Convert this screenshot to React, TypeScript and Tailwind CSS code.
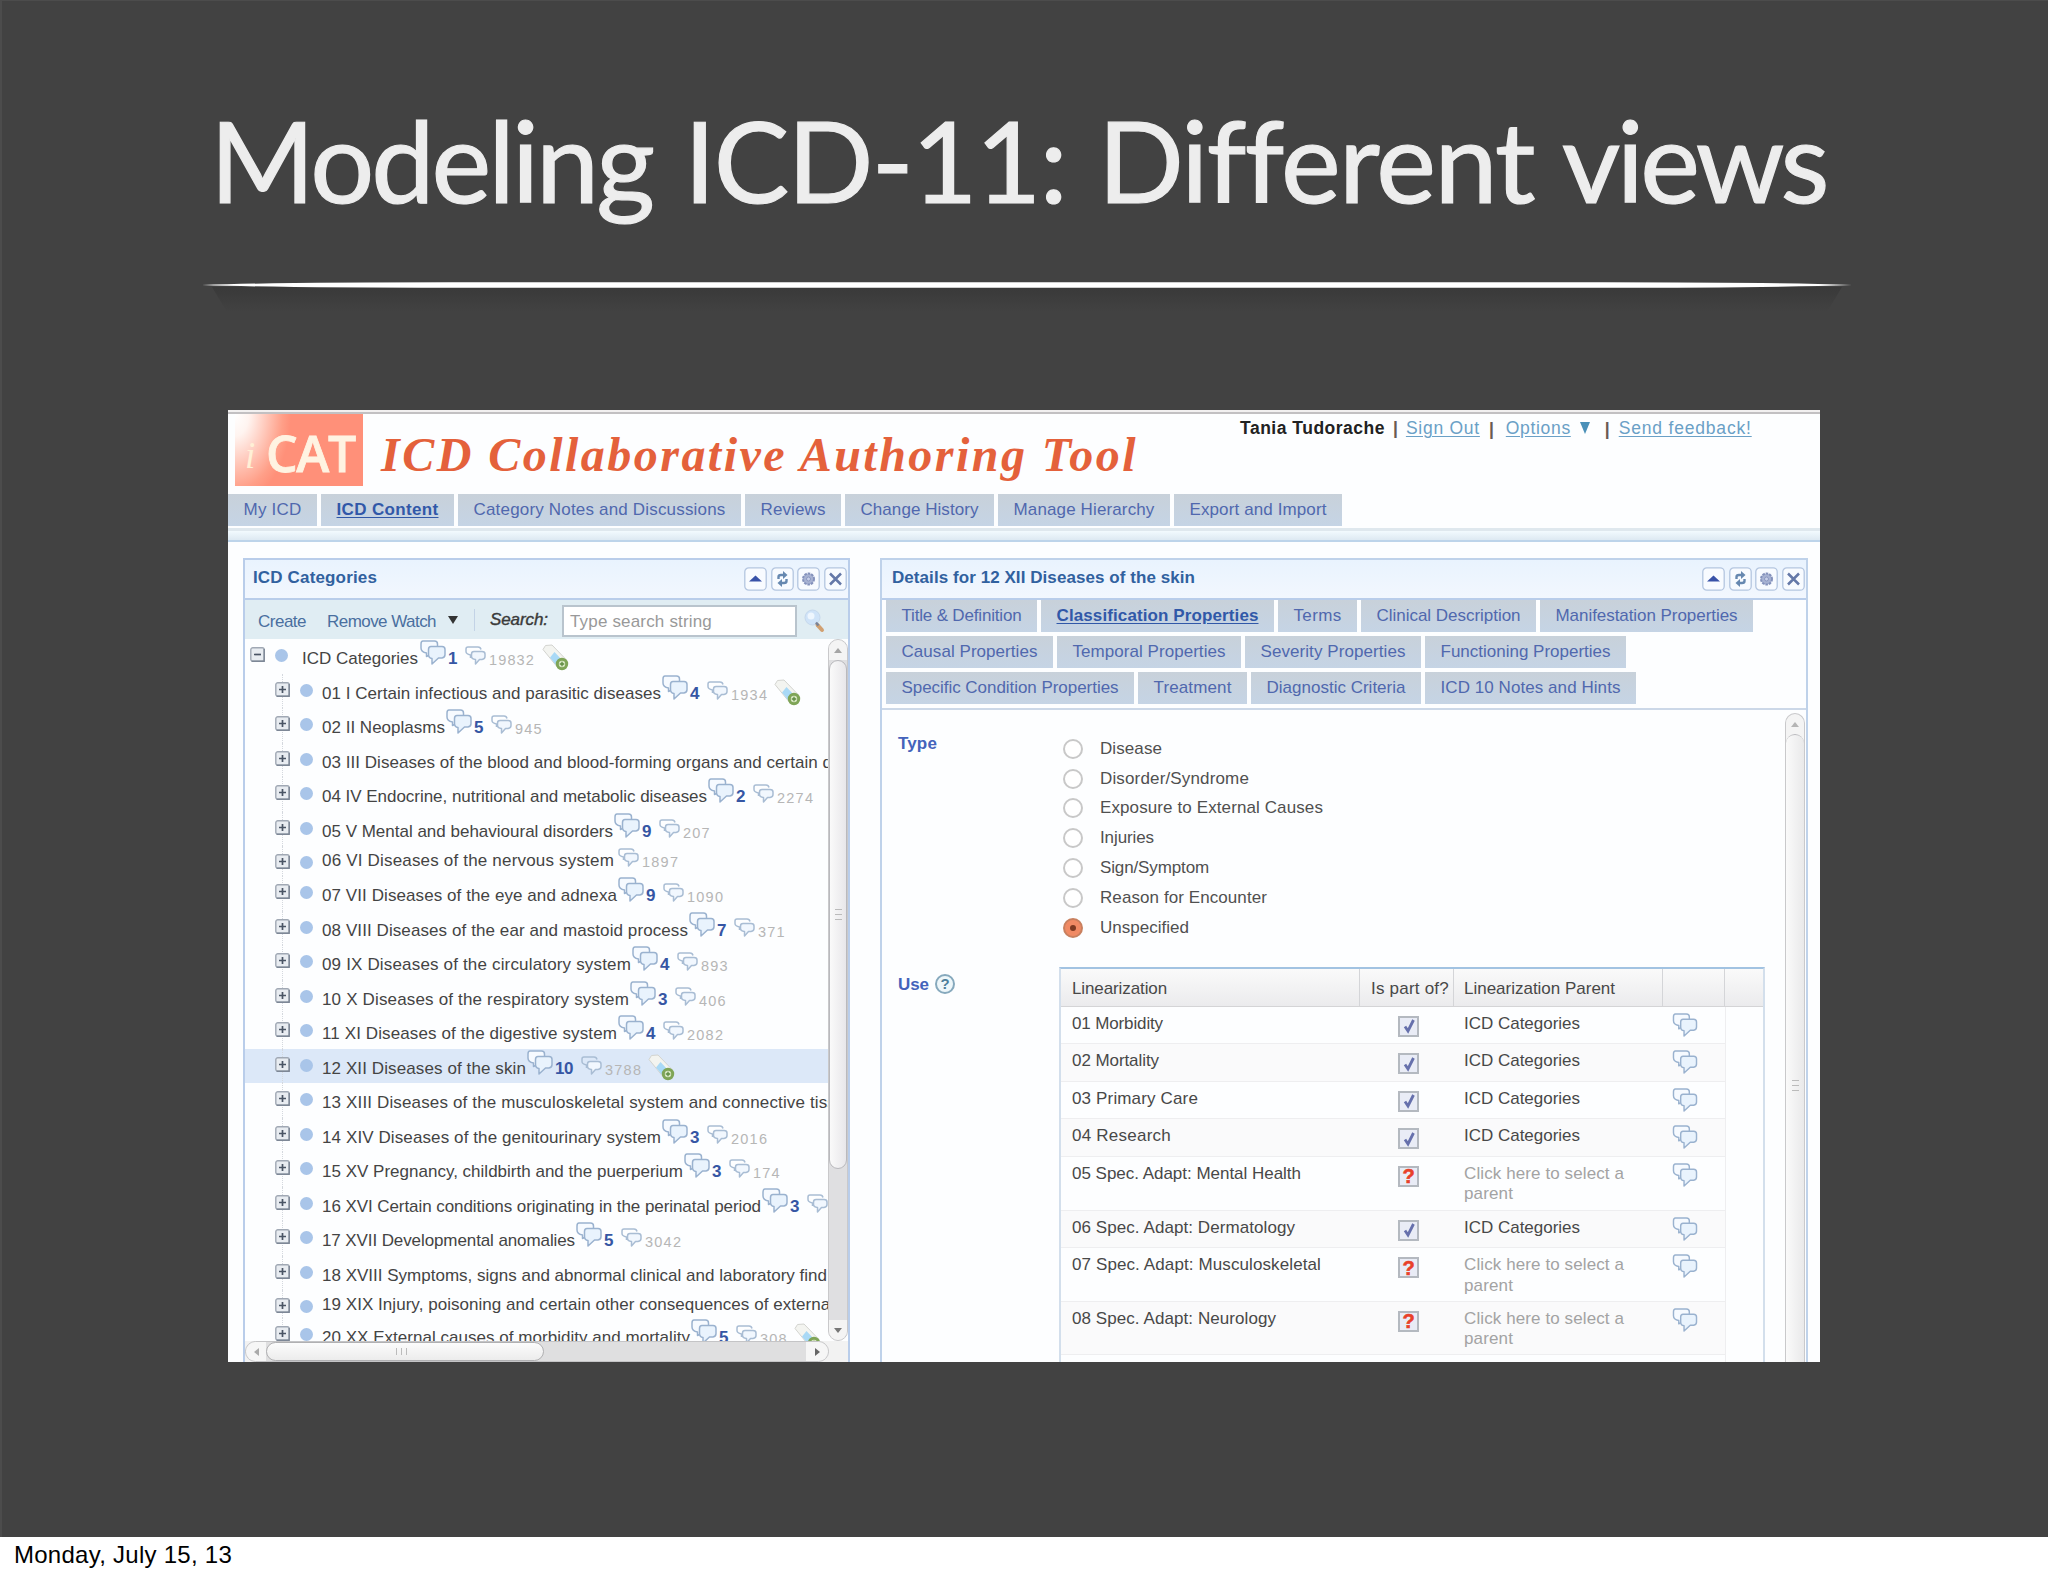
import { useLayoutEffect, useRef, useState, type ReactNode } from "react"
import { clsx } from "clsx"

type TabItem = { label: string; w: number; active?: boolean }
type TreeItem = { label: string; w: number; notes?: number; total?: number; tag?: boolean; selected?: boolean; h?: number }

const MAIN_TABS: TabItem[] = [
  { label: "My ICD", w: 58 },
  { label: "ICD Content", w: 102, active: true },
  { label: "Category Notes and Discussions", w: 252 },
  { label: "Reviews", w: 65 },
  { label: "Change History", w: 118 },
  { label: "Manage Hierarchy", w: 141 },
  { label: "Export and Import", w: 137 },
]

const DETAIL_TABS: TabItem[][] = [
  [
    { label: "Title & Definition", w: 120 },
    { label: "Classification Properties", w: 202, active: true },
    { label: "Terms", w: 48 },
    { label: "Clinical Description", w: 144 },
    { label: "Manifestation Properties", w: 182 },
  ],
  [
    { label: "Causal Properties", w: 136 },
    { label: "Temporal Properties", w: 153 },
    { label: "Severity Properties", w: 145 },
    { label: "Functioning Properties", w: 170 },
  ],
  [
    { label: "Specific Condition Properties", w: 217 },
    { label: "Treatment", w: 78 },
    { label: "Diagnostic Criteria", w: 139 },
    { label: "ICD 10 Notes and Hints", w: 180 },
  ],
]

const TREE: TreeItem[] = [
  { label: "01 I Certain infectious and parasitic diseases", w: 339, notes: 4, total: 1934, tag: true },
  { label: "02 II Neoplasms", w: 123, notes: 5, total: 945 },
  { label: "03 III Diseases of the blood and blood-forming organs and certain d", w: 510 },
  { label: "04 IV Endocrine, nutritional and metabolic diseases", w: 385, notes: 2, total: 2274 },
  { label: "05 V Mental and behavioural disorders", w: 291, notes: 9, total: 207 },
  { label: "06 VI Diseases of the nervous system", w: 292, total: 1897, h: 30 },
  { label: "07 VII Diseases of the eye and adnexa", w: 295, notes: 9, total: 1090 },
  { label: "08 VIII Diseases of the ear and mastoid process", w: 366, notes: 7, total: 371 },
  { label: "09 IX Diseases of the circulatory system", w: 309, notes: 4, total: 893 },
  { label: "10 X Diseases of the respiratory system", w: 307, notes: 3, total: 406 },
  { label: "11 XI Diseases of the digestive system", w: 295, notes: 4, total: 2082 },
  { label: "12 XII Diseases of the skin", w: 204, notes: 10, total: 3788, tag: true, selected: true },
  { label: "13 XIII Diseases of the musculoskeletal system and connective tiss", w: 514 },
  { label: "14 XIV Diseases of the genitourinary system", w: 339, notes: 3, total: 2016 },
  { label: "15 XV Pregnancy, childbirth and the puerperium", w: 361, notes: 3, total: 174 },
  { label: "16 XVI Certain conditions originating in the perinatal period", w: 439, notes: 3, total: 412 },
  { label: "17 XVII Developmental anomalies", w: 253, notes: 5, total: 3042 },
  { label: "18 XVIII Symptoms, signs and abnormal clinical and laboratory find", w: 505 },
  { label: "19 XIX Injury, poisoning and certain other consequences of external", w: 512, h: 28 },
  { label: "20 XX External causes of morbidity and mortality", w: 368, notes: 5, total: 308, tag: true },
]

const TYPES = [
  { label: "Disease", w: 62 },
  { label: "Disorder/Syndrome", w: 149 },
  { label: "Exposure to External Causes", w: 223 },
  { label: "Injuries", w: 54 },
  { label: "Sign/Symptom", w: 109 },
  { label: "Reason for Encounter", w: 167 },
  { label: "Unspecified", w: 89 },
]

const LINEARIZATIONS = [
  { label: "01 Morbidity", w: 91, part: true },
  { label: "02 Mortality", w: 87, part: true },
  { label: "03 Primary Care", w: 126, part: true },
  { label: "04 Research", w: 99, part: true },
  { label: "05 Spec. Adapt: Mental Health", w: 229, part: false },
  { label: "06 Spec. Adapt: Dermatology", w: 223, part: true },
  { label: "07 Spec. Adapt: Musculoskeletal", w: 249, part: false },
  { label: "08 Spec. Adapt: Neurology", w: 204, part: false },
]

// Tracks the text so that it takes up exactly `w` pixels
function Fit({ w, className, children }: { w: number; className?: string; children: string }) {
  const ref = useRef<HTMLSpanElement>(null)
  const [spacing, setSpacing] = useState(0)

  useLayoutEffect(() => {
    if (!ref.current) return
    const natural = ref.current.getBoundingClientRect().width - spacing * children.length
    setSpacing((w - natural) / children.length)
  }, [w, children])

  return (
    <span className={clsx("block shrink-0 whitespace-nowrap", className)} style={{ width: w }}>
      <span ref={ref} style={{ letterSpacing: spacing }}>{children}</span>
    </span>
  )
}

function Bubbles({ className }: { className?: string }) {
  return (
    <svg viewBox="0 0 26 25" className={clsx("h-[25px] w-[26px] shrink-0", className)} fill="none" stroke="#9ab2cf" strokeWidth="1.500" strokeLinejoin="round">
      <path d="M3 1h11.500q3 0 3 3v5q0 3-3 3.500L6.500 16.500V13Q1 12 1 8V4q0-3 2-3z" fill="#f6faff" />
      <path d="M11 6.500h11q3 0 3 3v5q0 3-3 3.500h-3.500L12 24v-5.500q-3.500-.5-3.500-4V9.500q0-3 2.500-3z" fill="#e9f3fd" />
    </svg>
  )
}

function MiniBubbles({ className }: { className?: string }) {
  return (
    <svg viewBox="0 0 21 19" className={clsx("h-[19px] w-[21px] shrink-0", className)} fill="none" stroke="#a9bdd4" strokeWidth="1.500" strokeLinejoin="round">
      <path d="M5.500 12V9Q1 8 1 5.500V3q0-2 2-2h10q2.500 0 3 2.500" />
      <path d="M9 5.500h8q3 0 3 2.500v2.500q0 2.500-3 3h-2.500L10.500 18v-4.500Q6.500 13 6.500 10.500V8q0-2.500 2.500-2.500z" fill="#f1f7fe" />
    </svg>
  )
}

function TagIcon({ className }: { className?: string }) {
  return (
    <svg viewBox="0 0 27 27" className={clsx("size-[27px] shrink-0", className)}>
      <path d="M1 5.500L3.500 1.500L10 1l15 15.500-8.500 8z" fill="#f3f4f0" stroke="#d3d4d0" />
      <path d="M12.500 8l7 7.500-5.500 5.500-6-7.500z" fill="#a9d9f6" />
      <circle cx="20" cy="20" r="4.700" fill="#d9e8c4" stroke="#7fa557" strokeWidth="3" />
      <path d="M17.800 20h4.400M20 17.800v4.400" stroke="#5d8a40" strokeWidth="1.300" />
    </svg>
  )
}

function Toggle({ open }: { open?: boolean }) {
  return (
    <svg viewBox="0 0 15 15" className="size-[15px] shrink-0">
      <rect x=".8" y=".8" width="13.400" height="13.400" rx="2" fill="#e8ecf1" stroke="#a0a8b4" strokeWidth="1.400" />
      <path d={open ? "M4 7.500h7" : "M4 7.500h7M7.500 4v7"} stroke="#4a5565" strokeWidth="1.700" />
      <path d="M1.500 14.200h12.700V2" fill="none" stroke="#7d8796" strokeWidth="1.400" />
    </svg>
  )
}

function PanelButtons() {
  const icons = [
    <path key="up" d="M5 14.500l6.500-6 6.500 6z" fill="#3852a8" />,
    <g key="sync" fill="none" stroke="#6688b0" strokeWidth="2.400">
      <path d="M7.500 12V10q0-2 2.500-2h3M15.500 12V14q0 2-2.500 2h-3" />
      <path d="M12 4l4.500 4-4.500 4zM11 12l-4.500 4 4.500 4z" fill="#6688b0" stroke="none" />
    </g>,
    <g key="gear">
      <circle cx="11.500" cy="12" r="5.500" fill="#a7b2d2" stroke="#8391bb" strokeWidth="2" strokeDasharray="2.500 1" />
      <circle cx="11.500" cy="12" r="2" fill="#c8d0e8" stroke="#8a97c0" />
    </g>,
    <path key="close" d="M6 6.500l11 11M17 6.500l-11 11" stroke="#6478a8" strokeWidth="2.500" />,
  ]
  return (
    <div className="flex gap-[3.700px]">
      {icons.map((icon, i) => (
        <svg key={i} viewBox="0 0 23 24" className="h-6 w-[23px]">
          <rect x=".8" y=".8" width="21.400" height="22.400" rx="4" fill="#f8fbff" stroke="#b4c6e0" strokeWidth="1.300" />
          {icon}
        </svg>
      ))}
    </div>
  )
}

function PanelHeader({ children }: { children: ReactNode }) {
  return (
    <div className="flex h-[40px] shrink-0 items-start justify-between border-b-2 border-[#b9cdea] bg-linear-to-b from-[#e9f3fe] to-[#f2f7fe] text-[17px] leading-5 font-bold text-[#31619f]">
      {children}
    </div>
  )
}

function Tab({ tab }: { tab: TabItem }) {
  return (
    <div className={clsx(
      "flex h-8 items-center bg-linear-to-b from-[#c8d1da] to-[#c5d4e5] px-[15.500px] text-[17px] leading-5",
      tab.active ? "font-bold text-[#3158a8] underline underline-offset-2" : "text-[#5068ae]",
    )}>
      <Fit w={tab.w}>{tab.label}</Fit>
    </div>
  )
}

function TreeRow({ item }: { item: TreeItem }) {
  const short = item.h !== undefined
  return (
    <div
      className={clsx("flex shrink-0 items-start pl-[30px] text-[17px] leading-5 text-[#444]", item.selected && "bg-[#dce8f8]")}
      style={{ height: item.h ?? 34.5 }}
    >
      <div className="relative flex h-full shrink-0 pt-[8px]">
        <div className="absolute top-0 left-[7px] h-full border-l border-dotted border-[#d4d8de]" />
        <div className="relative h-[15px]"><Toggle /></div>
      </div>
      <div className="mt-[10px] ml-[10px] size-[13px] shrink-0 rounded-full bg-[#a9c5e9]" />
      <div className={clsx("ml-[9px] flex shrink-0 items-start", short ? "pt-[5px]" : "pt-[10px]")}>
        <Fit w={item.w}>{item.label}</Fit>
        {item.notes && (
          <>
            <Bubbles className="-mt-[9px] ml-px" />
            <Fit w={item.notes > 9 ? 18 : 9} className="ml-[2px] font-bold text-[#3656a4]">{String(item.notes)}</Fit>
          </>
        )}
        {item.total && (
          <>
            <MiniBubbles className={clsx("-mt-[3px]", item.notes ? "ml-[8px]" : "ml-[4px]")} />
            <Fit w={String(item.total).length * 9.3} className="mt-px ml-[3px] text-[14.500px] text-[#b6b6b6]">{String(item.total)}</Fit>
          </>
        )}
        {item.tag && <TagIcon className="-mt-[5px] ml-[6px]" />}
      </div>
    </div>
  )
}

function CategoriesPanel() {
  return (
    <section className="flex h-[804px] w-[607px] shrink-0 flex-col border-x-2 border-t-2 border-[#b9cdea] bg-[#fdfeff]">
      <PanelHeader>
        <Fit w={124} className="mt-[8px] ml-2">ICD Categories</Fit>
        <div className="mt-[7px] mr-px"><PanelButtons /></div>
      </PanelHeader>

      <div className="flex h-[39px] shrink-0 items-start bg-[#e0edf3] pl-[13px] text-[17px] leading-5 text-[#4a6f9f]">
        <Fit w={48} className="mt-[12px]">Create</Fit>
        <Fit w={109} className="mt-[12px] ml-[21px]">Remove Watch</Fit>
        <svg viewBox="0 0 10 8" className="mt-[16px] ml-3 h-2 w-[10px]"><path d="M0 0h10L5 8z" fill="#333" /></svg>
        <div className="mt-[9px] ml-[16px] h-[22px] w-px bg-[#c3d3e6]" />
        <Fit w={58} className="mt-[10px] ml-[15px] text-[#3a3a3a] italic [-webkit-text-stroke:0.400px_#3a3a3a]">Search:</Fit>
        <div className="mt-[5px] ml-[14px] h-[32px] w-[235px] shrink-0 border-2 border-[#b9c4cd] bg-white pt-[5px] pl-[6px] text-[#999]">
          <Fit w={142}>Type search string</Fit>
        </div>
        <svg viewBox="0 0 22 28" className="mt-[8px] ml-[7px] h-[28px] w-[22px]">
          <circle cx="8.500" cy="9.500" r="7.500" fill="#cfe3f8" stroke="#c6d8ec" />
          <circle cx="7" cy="8" r="3.500" fill="#eef6fe" />
          <path d="M13.500 17l4.500 5" stroke="#d1a071" strokeWidth="4" strokeLinecap="round" />
          <path d="M12 14.500l2.500 3" stroke="#7a8296" strokeWidth="2.500" />
        </svg>
      </div>

      <div className="flex h-[702px] shrink-0">
        <div className="flex w-[583px] shrink-0 flex-col overflow-hidden">
          <div className="flex h-[34.500px] shrink-0 items-start pl-[5px] text-[17px] leading-5 text-[#444]">
            <div className="mt-[8px]"><Toggle open /></div>
            <div className="mt-[10px] ml-[10px] size-[13px] shrink-0 rounded-full bg-[#a9c5e9]" />
            <Fit w={116} className="mt-[10px] ml-[14px]">ICD Categories</Fit>
            <Bubbles className="mt-px ml-[2px]" />
            <Fit w={9} className="mt-[10px] ml-[2px] font-bold text-[#3656a4]">1</Fit>
            <MiniBubbles className="mt-[7px] ml-[8px]" />
            <Fit w={46} className="mt-[11px] ml-[3px] text-[14.500px] text-[#b6b6b6]">19832</Fit>
            <TagIcon className="mt-[5px] ml-[7px]" />
          </div>
          {TREE.map(item => <TreeRow key={item.label} item={item} />)}
        </div>
        <div className="flex w-5 shrink-0 flex-col rounded-full border border-[#c9c9cb] bg-[#dfdfe1]">
          <div className="grid h-[20px] place-items-center rounded-t-full bg-[#f4f4f4]">
            <svg viewBox="0 0 8 5" className="h-[5px] w-2"><path d="M0 5l4-5 4 5z" fill="#a5a5a5" /></svg>
          </div>
          <div className="grid h-[509px] place-items-center rounded-[10px] border border-[#b9b9bd] bg-linear-to-r from-[#fafafa] to-[#e8e7ea]">
            <div className="h-[11px] w-[7px] border-y border-[#bbb] pt-[4px]"><div className="h-px bg-[#bbb]" /></div>
          </div>
          <div className="flex-1" />
          <div className="grid h-[20px] place-items-center rounded-b-full bg-[#f4f4f4]">
            <svg viewBox="0 0 8 5" className="h-[5px] w-2"><path d="M0 0h8L4 5z" fill="#777" /></svg>
          </div>
        </div>
      </div>

      <div className="flex h-[21px] shrink-0 bg-[#f2f2f2]">
        <div className="flex w-[584px] rounded-full border border-[#c4c4c6] bg-[#dfdfe0]">
          <div className="grid w-[20px] place-items-center rounded-l-full bg-[#f6f6f6]">
            <svg viewBox="0 0 5 8" className="h-2 w-[5px]"><path d="M5 0v8L0 4z" fill="#aaa" /></svg>
          </div>
          <div className="grid w-[278px] place-items-center rounded-full border border-[#b0b0b2] bg-linear-to-b from-[#fcfcfc] to-[#ececec]">
            <div className="-ml-2 h-[7px] w-[11px] border-x border-[#bbb] pl-[4px]"><div className="h-full w-px bg-[#bbb]" /></div>
          </div>
          <div className="flex-1" />
          <div className="grid w-[22px] place-items-center rounded-r-full bg-[#f6f6f6]">
            <svg viewBox="0 0 5 8" className="h-2 w-[5px]"><path d="M0 0v8l5-4z" fill="#666" /></svg>
          </div>
        </div>
      </div>
    </section>
  )
}

function PartBox({ checked }: { checked: boolean }) {
  return (
    <div className="flex size-[21px] items-center justify-center border-2 border-[#b4b9c0] bg-[#e9ecf6]">
      {checked
        ? <svg viewBox="0 0 14 16" className="h-4 w-[14px]"><path d="M3 8.500l3 4.500L11.500 2" fill="none" stroke="#6670ac" strokeWidth="2.800" /></svg>
        : <span className="text-[20px] leading-4 font-bold text-[#e8412a] [-webkit-text-stroke:0.600px_#e8412a]">?</span>}
    </div>
  )
}

function LinearizationTable() {
  return (
    <div className="h-[396px] w-[706px] overflow-hidden border-x-2 border-t-2 border-x-[#d3dfec] border-t-[#a2c3e2] text-[17px] leading-5 text-[#484848]">
      <div className="flex h-[38px] border-b border-[#d4d4d6] bg-linear-to-b from-[#fafafa] to-[#ebebed]">
        <div className="w-[299px] border-r border-[#d4d5d8] pt-[10px] pl-[11px]"><Fit w={95}>Linearization</Fit></div>
        <div className="w-[94px] border-r border-[#d4d5d8] pt-[10px] pl-[11px]"><Fit w={78}>Is part of?</Fit></div>
        <div className="w-[209px] border-r border-[#d4d5d8] pt-[10px] pl-[10px]"><Fit w={151}>Linearization Parent</Fit></div>
        <div className="w-[62px] border-r border-[#d4d5d8]" />
      </div>
      {LINEARIZATIONS.map((row, i) => (
        <div
          key={row.label}
          className={clsx(
            "flex w-[665px] items-start border-r border-b border-[#eeeef0] pl-[11px]",
            row.part ? "h-[37.600px]" : "h-[53.600px]",
            i % 2 === 1 && "bg-[#fafafb]",
          )}
        >
          <Fit w={row.w} className="mt-[7px]">{row.label}</Fit>
          <div className="flex-1" />
          <div className="mt-[9px] w-[66px] shrink-0"><PartBox checked={row.part} /></div>
          <div className="mt-[7px] w-[208px] shrink-0">
            {row.part
              ? <Fit w={116}>ICD Categories</Fit>
              : (
                <div className="text-[#a3a3a3]">
                  <Fit w={160}>Click here to select a</Fit>
                  <Fit w={49} className="mt-[0.500px]">parent</Fit>
                </div>
              )}
          </div>
          <Bubbles className="mt-[6px] mr-[27px] h-[24px]!" />
        </div>
      ))}
      <div className="flex w-[665px] justify-end border-r border-[#eeeef0] pr-[38px]">
        <div className="mt-[7px] h-[2px] w-3 bg-[#88a8cc]" />
      </div>
    </div>
  )
}

function DetailsPanel() {
  return (
    <section className="flex h-[804px] w-[928px] shrink-0 flex-col border-x-2 border-t-2 border-[#bfd2ea] bg-[#fdfeff]">
      <PanelHeader>
        <Fit w={303} className="mt-[8px] ml-[10px]">Details for 12 XII Diseases of the skin</Fit>
        <div className="mt-[7px] mr-px"><PanelButtons /></div>
      </PanelHeader>

      <div className="flex h-[110px] shrink-0 flex-col gap-1 border-b-2 border-[#ccd8e8] pl-1">
        {DETAIL_TABS.map((tabs, i) => (
          <div key={i} className="flex gap-[4px]">
            {tabs.map(tab => <Tab key={tab.label} tab={tab} />)}
          </div>
        ))}
      </div>

      <div className="flex flex-1 justify-between overflow-hidden">
        <div className="pl-4 text-[17px] leading-5">
          <div className="flex">
            <Fit w={39} className="mt-[24px] mr-[126px] font-bold text-[#4463bb]">Type</Fit>
            <div className="pt-[24px]">
              {TYPES.map(type => (
                <div key={type.label} className="flex h-[29.800px] items-center">
                  <div className={clsx(
                    "mr-[17px] flex size-5 items-center justify-center rounded-full border-2",
                    type.label === "Unspecified" ? "border-[#c8805f] bg-[#f08a64]" : "border-[#c8c8c8] bg-white",
                  )}>
                    {type.label === "Unspecified" && <div className="size-[6px] rounded-full bg-[#7d3a22]" />}
                  </div>
                  <Fit w={type.w} className="text-[#505050]">{type.label}</Fit>
                </div>
              ))}
            </div>
          </div>
          <div className="mt-[24px] flex items-start">
            <Fit w={31} className="mt-[8px] font-bold text-[#4463bb]">Use</Fit>
            <div className="mt-[7px] mr-[104px] ml-[6px] grid size-5 place-items-center rounded-full border-2 border-[#86a9bd] bg-[#eef7fa] text-[15px] leading-4 font-bold text-[#4e7f9b]">?</div>
            <LinearizationTable />
          </div>
        </div>
        <div className="mt-[3px] mr-px flex w-5 shrink-0 flex-col rounded-t-full border-x border-t border-[#c9c9cb] bg-[#f4f4f4]">
          <div className="grid h-[20px] shrink-0 place-items-center">
            <svg viewBox="0 0 8 5" className="h-[5px] w-2"><path d="M0 5l4-5 4 5z" fill="#b5b5b5" /></svg>
          </div>
          <div className="flex-1 rounded-t-[10px] border-t border-[#b9b9bd] bg-linear-to-r from-[#fafafa] to-[#e9e9ea] pt-[345px]">
            <div className="mx-auto h-[11px] w-[7px] border-y border-[#bbb] pt-[4px]"><div className="h-px bg-[#bbb]" /></div>
          </div>
        </div>
      </div>
    </section>
  )
}

function AppHeader() {
  return (
    <header className="flex h-[80px] items-start pl-[7px]">
      <div className="flex h-[72px] w-[128px] items-start bg-[radial-gradient(56px_88px_at_0%_0%,#ffffff_0%,#fff4f0_25%,#ff9f88_85%,#ff9079_100%)] pl-[10px]">
        <Fit w={21} className="mt-[22px] font-['Liberation_Serif',serif] text-[37px] leading-[40px] text-[#fff0d6] italic">i</Fit>
        <Fit w={89} className="mt-[8px] font-['Open_Sans',sans-serif] text-[50px] leading-[62px] font-semibold text-[#fff3e2] [-webkit-text-stroke:0.800px_#fff3e2]">CAT</Fit>
      </div>
      <Fit w={757} className="mt-[14px] ml-[18px] font-['Liberation_Serif',serif] text-[48px] leading-[54px] font-bold text-[#e4613b] italic">ICD Collaborative Authoring Tool</Fit>
      <div className="ml-[102px] flex pt-[4px] text-[17.500px] leading-5 text-[#6aa0c6]">
        <Fit w={145} className="font-bold text-[#222]">Tania Tudorache</Fit>
        <span className="mr-[8px] ml-[8px] font-bold text-[#6a5a52]">|</span>
        <Fit w={74} className="underline underline-offset-2">Sign Out</Fit>
        <span className="mt-px mr-[12px] ml-[9px] font-bold text-[#6a5a52]">|</span>
        <Fit w={65} className="underline underline-offset-2">Options</Fit>
        <svg viewBox="0 0 10 12" className="mt-[4px] ml-[9px] h-3 w-[10px]"><path d="M0 0h10L5 12z" fill="#4a90b8" /></svg>
        <span className="mt-px mr-[9px] ml-[15px] font-bold text-[#6a5a52]">|</span>
        <Fit w={133} className="underline underline-offset-2">Send feedback!</Fit>
      </div>
    </header>
  )
}

export default function App() {
  return (
    <div className="flex h-[1576px] w-[2048px] flex-col bg-[#424242] font-['Liberation_Sans',Arial,sans-serif]">
      <div className="h-[1537px] border-t border-l-2 border-[#4c4c4c]">
        <h1 className="flex h-[279px] gap-[32px] pt-[88px] pl-[208px] font-['Lato',sans-serif] text-[113px] leading-[140px] text-[#ededed] [-webkit-text-stroke:1.200px_#ededed]">
          <Fit w={442}>Modeling</Fit>
          <Fit w={382}>ICD-11:</Fit>
          <Fit w={432}>Different</Fit>
          <Fit w={264}>views</Fit>
        </h1>
        <div className="h-[130px] pl-[200px]">
          <svg viewBox="0 0 1650 40" className="h-10 w-[1650px]">
            <defs>
              <linearGradient id="rule-shadow" x1="0" y1="0" x2="0" y2="1">
                <stop offset="0" stopColor="#393939" />
                <stop offset="1" stopColor="#424242" />
              </linearGradient>
            </defs>
            <path d="M10 7h1630l-15 25H25z" fill="url(#rule-shadow)" />
            <path d="M0 5Q80 2.200 250 2.200H1400Q1570 2.200 1650 5Q1570 7.800 1400 7.800H250Q80 7.800 0 5z" fill="#fff" />
          </svg>
        </div>

        <main className="ml-[226px] flex h-[952px] w-[1592px] flex-col overflow-hidden bg-[#fdfeff]">
          <div className="h-[4px] shrink-0 border-b-2 border-[#c2c0c2] bg-[#f2f0f0]" />
          <AppHeader />
          <nav className="flex h-[33px] shrink-0 gap-[4px]">
            {MAIN_TABS.map(tab => <Tab key={tab.label} tab={tab} />)}
          </nav>
          <div className="mt-[1px] h-[14px] shrink-0 border-t-[3px] border-b-2 border-t-[#dfe8ee] border-b-[#bdd4ea] bg-linear-to-b from-[#f2fafe] to-[#dde9f2]" />
          <div className="mt-[16px] flex gap-[30px] pl-[15px]">
            <CategoriesPanel />
            <DetailsPanel />
          </div>
        </main>
      </div>
      <footer className="h-[39px] bg-white pt-[6px] pl-[14px] text-[24px] leading-6 text-black">
        <Fit w={218}>Monday, July 15, 13</Fit>
      </footer>
    </div>
  )
}
